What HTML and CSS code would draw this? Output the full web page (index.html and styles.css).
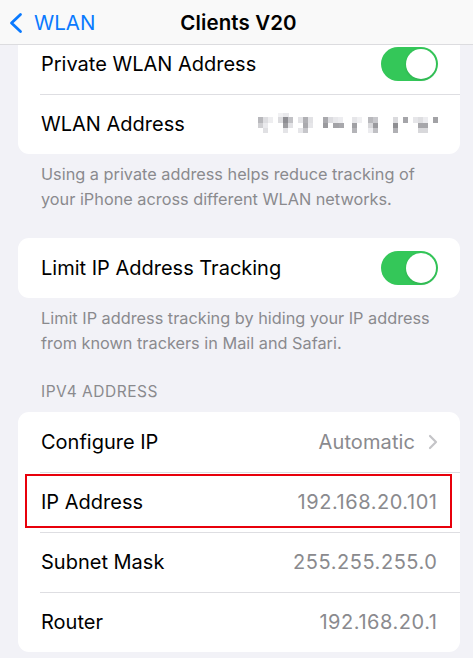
FILE: index.html
```html
<!DOCTYPE html>
<html>
<head>
<meta charset="utf-8">
<link rel="stylesheet" href="styles.css">
</head>
<body>
<div class="screen">
  <header class="nav">
    <div class="back">
      <svg class="back-chev" width="16" height="22" viewBox="0 0 16 22"><path d="M12.5 2.5 L3.5 11 L12.5 19.5" fill="none" stroke="#0a7aff" stroke-width="2.8" stroke-linecap="round" stroke-linejoin="round"/></svg>
      <span class="back-label">WLAN</span>
    </div>
    <div class="title">Clients V20</div>
  </header>

  <main class="content">
    <section class="card">
      <div class="row">
        <span class="label">Private WLAN Address</span>
        <span class="toggle"><span class="knob"></span></span>
      </div>
      <div class="row">
        <span class="label">WLAN Address</span>
        <svg class="blur" width="180" height="20" viewBox="0 0 180 20">
          <g>
            <rect x="20" y="0" width="5" height="4" fill="#f1f1f3"/>
            <rect x="25" y="0" width="6" height="4" fill="#e9e9ec"/>
            <rect x="0" y="4" width="5" height="6" fill="#b8b8bc"/>
            <rect x="5" y="4" width="5" height="6" fill="#dedee1"/>
            <rect x="10" y="4" width="5" height="6" fill="#eeeef0"/>
            <rect x="20" y="4" width="5" height="6" fill="#dcdcdf"/>
            <rect x="25" y="4" width="5" height="6" fill="#8e8e93"/>
            <rect x="30" y="4" width="5" height="6" fill="#c2c2c6"/>
            <rect x="40" y="4" width="5" height="6" fill="#e4e4e7"/>
            <rect x="45" y="4" width="5" height="6" fill="#b0b0b4"/>
            <rect x="50" y="4" width="5" height="6" fill="#e2e2e5"/>
            <rect x="65" y="4" width="5" height="6" fill="#a9a9ad"/>
            <rect x="70" y="4" width="5" height="6" fill="#dcdce0"/>
            <rect x="75" y="4" width="5" height="6" fill="#e8e8eb"/>
            <rect x="80" y="4" width="5" height="6" fill="#ededf0"/>
            <rect x="94" y="4" width="5" height="6" fill="#e6e6e9"/>
            <rect x="99" y="4" width="5" height="6" fill="#f0f0f2"/>
            <rect x="110" y="4" width="5" height="6" fill="#b8b8bc"/>
            <rect x="115" y="4" width="5" height="6" fill="#c8c8cc"/>
            <rect x="135" y="4" width="5" height="6" fill="#dadadd"/>
            <rect x="145" y="4" width="5" height="6" fill="#a5a5a9"/>
            <rect x="155" y="4" width="5" height="6" fill="#e6e6e9"/>
            <rect x="160" y="4" width="5" height="6" fill="#dedee1"/>
            <rect x="165" y="4" width="5" height="6" fill="#ececef"/>
            <rect x="175" y="4" width="5" height="6" fill="#a2a2a6"/>

            <rect x="0" y="10" width="5" height="5" fill="#d0d0d3"/>
            <rect x="5" y="10" width="5" height="5" fill="#eaeaed"/>
            <rect x="25" y="10" width="5" height="5" fill="#9d9da1"/>
            <rect x="30" y="10" width="5" height="5" fill="#e2e2e5"/>
            <rect x="45" y="10" width="5" height="5" fill="#aaaaae"/>
            <rect x="50" y="10" width="5" height="5" fill="#e6e6e9"/>
            <rect x="65" y="10" width="5" height="5" fill="#9a9a9e"/>
            <rect x="75" y="10" width="6" height="5" fill="#a3a3a7"/>
            <rect x="81" y="10" width="5" height="5" fill="#a8a8ac"/>
            <rect x="94" y="10" width="5" height="5" fill="#a0a0a4"/>
            <rect x="110" y="10" width="5" height="5" fill="#d8d8db"/>
            <rect x="115" y="10" width="5" height="5" fill="#9a9a9e"/>
            <rect x="135" y="10" width="5" height="5" fill="#8e8e92"/>
            <rect x="160" y="10" width="10" height="5" fill="#a6a6aa"/>

            <rect x="5" y="15" width="5" height="5" fill="#e0e0e3"/>
            <rect x="25" y="15" width="5" height="5" fill="#e4e4e7"/>
            <rect x="40" y="15" width="5" height="5" fill="#e6e6e9"/>
            <rect x="45" y="15" width="5" height="5" fill="#c6c6ca"/>
            <rect x="94" y="15" width="5" height="5" fill="#b4b4b8"/>
            <rect x="110" y="15" width="5" height="5" fill="#ececef"/>
            <rect x="115" y="15" width="5" height="5" fill="#c0c0c4"/>
            <rect x="135" y="15" width="5" height="5" fill="#b0b0b4"/>
            <rect x="160" y="15" width="10" height="5" fill="#d8d8db"/>
          </g>
        </svg>
      </div>
    </section>
    <p class="footer">Using a private address helps reduce tracking of your iPhone across different WLAN networks.</p>

    <section class="card card-gap">
      <div class="row">
        <span class="label">Limit IP Address Tracking</span>
        <span class="toggle"><span class="knob"></span></span>
      </div>
    </section>
    <p class="footer">Limit IP address tracking by hiding your IP address from known trackers in Mail and Safari.</p>

    <h2 class="section-header">IPV4 ADDRESS</h2>
    <section class="card">
      <div class="row">
        <span class="label">Configure IP</span>
        <span class="value">Automatic
          <svg class="chev" width="10" height="16" viewBox="0 0 10 16"><path d="M2 2 L8 8 L2 14" fill="none" stroke="#c4c4c7" stroke-width="2.2" stroke-linecap="round" stroke-linejoin="round"/></svg>
        </span>
      </div>
      <div class="row highlighted">
        <span class="label">IP Address</span>
        <span class="value num">192.168.20.101</span>
        <span class="highlight-box"></span>
      </div>
      <div class="row">
        <span class="label">Subnet Mask</span>
        <span class="value num">255.255.255.0</span>
      </div>
      <div class="row">
        <span class="label">Router</span>
        <span class="value num">192.168.20.1</span>
      </div>
    </section>
  </main>
</div>
</body>
</html>
```

FILE: styles.css
```css
* { box-sizing: border-box; }
html, body {
  margin: 0;
  padding: 0;
  background: #f2f2f7;
}
body {
  font-family: Inter, "Noto Sans", sans-serif;
  color: #000;
  -webkit-font-smoothing: antialiased;
}
.screen {
  position: relative;
  width: 473px;
  height: 658px;
  overflow: hidden;
  background: #f2f2f7;
}
.nav {
  position: absolute;
  top: 0;
  left: 0;
  right: 0;
  height: 45px;
  background: #f9f9f9;
  border-bottom: 1px solid #dcdcdf;
  z-index: 5;
  display: flex;
  align-items: center;
  justify-content: center;
}
.back {
  position: absolute;
  left: 8px;
  top: 10px;
  display: flex;
  align-items: center;
  gap: 10px;
  color: #0a7aff;
}
.back-chev { display: block; }
.back-label {
  font-size: 20.5px;
  letter-spacing: 0;
}
.title {
  font-size: 20.5px;
  font-weight: 600;
  letter-spacing: 0.1px;
  margin-left: 4px;
}
.content {
  padding: 34px 13px 0 18px;
  display: flex;
  flex-direction: column;
}
.card {
  background: #fff;
  border-radius: 11px;
  display: flex;
  flex-direction: column;
}
.card-gap { margin-top: 26px; }
.row {
  position: relative;
  height: 60px;
  display: flex;
  align-items: center;
  justify-content: space-between;
  padding: 0 23px 0 23px;
  font-size: 20px;
  letter-spacing: 0;
}
.row + .row::before {
  content: "";
  position: absolute;
  top: 0;
  left: 22px;
  right: 0;
  height: 1px;
  background: #dedee2;
}
.label { color: #000; }
.value {
  color: #8a8a8e;
  display: flex;
  align-items: center;
  gap: 13px;
  letter-spacing: 0.1px;
}
.num {
  letter-spacing: 0.55px;
  margin-right: -0.5px;
}
.chev { display: block; margin-right: -1px; }
.toggle {
  width: 57px;
  height: 34px;
  border-radius: 17px;
  background: #34c759;
  position: relative;
  margin-right: -1px;
}
.knob {
  position: absolute;
  right: 2px;
  top: 2px;
  width: 30px;
  height: 30px;
  border-radius: 50%;
  background: #fff;
  box-shadow: 0 1px 3px rgba(0,0,0,0.12);
}
.blur { display: block; margin-right: -1px; margin-top: -2px; }
.footer {
  margin: 0;
  padding: 8px 16px 0 23px;
  font-size: 16.3px;
  line-height: 25px;
  color: #8a8a8e;
  letter-spacing: 0;
}
.section-header {
  margin: 26px 0 10px 0;
  padding-left: 23px;
  font-size: 15.5px;
  line-height: 20px;
  font-weight: 400;
  color: #8a8a8e;
  letter-spacing: 0.5px;
}
.highlight-box {
  position: absolute;
  left: 7px;
  right: 8px;
  top: 2px;
  bottom: 4px;
  border: 2px solid #e8000b;
  pointer-events: none;
}
```
